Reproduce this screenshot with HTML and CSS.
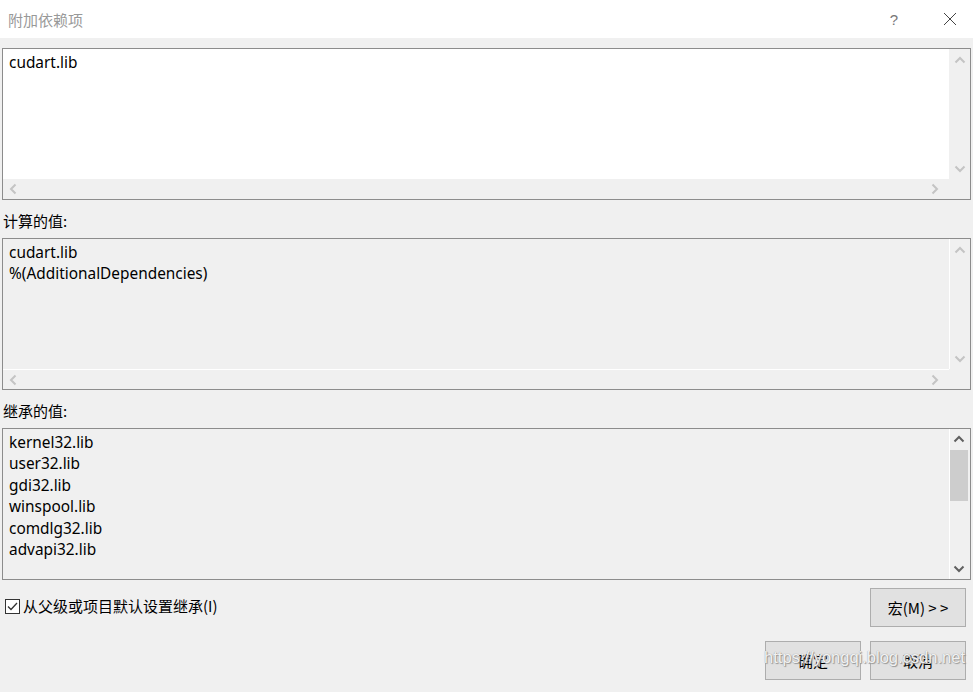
FILE: index.html
```html
<!DOCTYPE html>
<html lang="zh">
<head>
<meta charset="utf-8">
<link rel="stylesheet" href="styles.css">
</head>
<body>
<div class="dialog">
  <div class="titlebar">
    <span class="title">附加依赖项</span>
    <span class="help">?</span>
    <span class="close">
      <svg width="14" height="14" viewBox="0 0 14 14"><path d="M1 1L13 13M13 1L1 13" stroke="#444" stroke-width="1" fill="none"/></svg>
    </span>
  </div>
  <div class="content">
    <div class="box editable two">
      <div class="text">cudart.lib</div>
      <div class="vscroll">
        <svg class="arr" width="12" height="8" viewBox="0 0 12 8"><path d="M1.5 6.5L6 2L10.5 6.5" stroke="#c4c4c4" stroke-width="2" fill="none"/></svg>
        <svg class="arr" width="12" height="8" viewBox="0 0 12 8"><path d="M1.5 1.5L6 6L10.5 1.5" stroke="#c4c4c4" stroke-width="2" fill="none"/></svg>
      </div>
      <div class="hscroll">
        <svg class="arr" width="8" height="12" viewBox="0 0 8 12"><path d="M6.5 1.5L2 6L6.5 10.5" stroke="#c4c4c4" stroke-width="2" fill="none"/></svg>
        <svg class="arr" width="8" height="12" viewBox="0 0 8 12"><path d="M1.5 1.5L6 6L1.5 10.5" stroke="#c4c4c4" stroke-width="2" fill="none"/></svg>
      </div>
      <div class="corner"></div>
    </div>
    <div class="label">计算的值:</div>
    <div class="box readonly two">
      <div class="text">cudart.lib<br>%(AdditionalDependencies)</div>
      <div class="vscroll">
        <svg class="arr" width="12" height="8" viewBox="0 0 12 8"><path d="M1.5 6.5L6 2L10.5 6.5" stroke="#c4c4c4" stroke-width="2" fill="none"/></svg>
        <svg class="arr" width="12" height="8" viewBox="0 0 12 8"><path d="M1.5 1.5L6 6L10.5 1.5" stroke="#c4c4c4" stroke-width="2" fill="none"/></svg>
      </div>
      <div class="hscroll">
        <svg class="arr" width="8" height="12" viewBox="0 0 8 12"><path d="M6.5 1.5L2 6L6.5 10.5" stroke="#c4c4c4" stroke-width="2" fill="none"/></svg>
        <svg class="arr" width="8" height="12" viewBox="0 0 8 12"><path d="M1.5 1.5L6 6L1.5 10.5" stroke="#c4c4c4" stroke-width="2" fill="none"/></svg>
      </div>
      <div class="corner"></div>
    </div>
    <div class="label">继承的值:</div>
    <div class="box readonly one">
      <div class="text">kernel32.lib<br>user32.lib<br>gdi32.lib<br>winspool.lib<br>comdlg32.lib<br>advapi32.lib</div>
      <div class="vscroll active">
        <svg class="arr" width="12" height="8" viewBox="0 0 12 8"><path d="M1.5 6.5L6 2L10.5 6.5" stroke="#606060" stroke-width="2" fill="none"/></svg>
        <div class="thumb"></div>
        <div class="spacer"></div>
        <svg class="arr" width="12" height="8" viewBox="0 0 12 8"><path d="M1.5 1.5L6 6L10.5 1.5" stroke="#606060" stroke-width="2" fill="none"/></svg>
      </div>
    </div>
    <div class="bottom">
      <div class="left">
        <label class="check">
          <span class="cbox"><svg width="13" height="13" viewBox="0 0 13 13"><path d="M2 6.5L5 9.5L11 3" stroke="#333" stroke-width="1.3" fill="none"/></svg></span>
          <span class="ctext">从父级或项目默认设置继承(I)</span>
        </label>
      </div>
      <div class="right">
        <div class="btn">宏(M) &gt; &gt;</div>
        <div class="btnrow">
          <div class="btn">确定</div>
          <div class="btn">取消</div>
        </div>
      </div>
    </div>
  </div>
  <div class="watermark">https://yongqi.blog.csdn.net</div>
</div>
</body>
</html>
```
FILE: styles.css
```css
* { box-sizing: border-box; }
html, body { margin: 0; padding: 0; }
body {
  width: 973px;
  height: 692px;
  overflow: hidden;
  background: #f0f0f0;
  font-family: "Noto Sans", "Noto Sans CJK SC", sans-serif;
  font-size: 15px;
  color: #000;
}
.dialog { position: relative; width: 973px; height: 692px; }
.titlebar {
  height: 38px;
  background: #fff;
  display: flex;
  align-items: center;
  padding-left: 8px;
}
.title { color: #999; font-family: "Noto Sans CJK SC", sans-serif; font-size: 15px; flex: 1; }
.help { color: #777; font-size: 15px; width: 30px; margin-right: 34px; text-align: center; font-family: "Liberation Sans", sans-serif; }
.close { width: 14px; height: 14px; margin-right: 16px; display: flex; }
.content { padding: 10px 2px 0 2px; }
.box {
  height: 152px;
  border: 1px solid #8c8c8c;
  display: grid;
  grid-template-columns: 1fr 21px;
}
.box.two { grid-template-rows: 1fr 20px; }
.box.one { grid-template-rows: 1fr; }
.editable .text { background: #fff; }
.readonly .text { background: #f0f0f0; }
.text {
  padding: 3px 6px 2px;
  line-height: 21.4px;
  font-family: "Noto Sans", "Noto Sans CJK SC", sans-serif;
  font-size: 15.4px;
  overflow: hidden;
}
.vscroll {
  background: #f0f0f0;
  display: flex;
  flex-direction: column;
  align-items: center;
  justify-content: space-between;
  padding: 7px 0 6px;
}
.readonly .vscroll { border-left: 1px solid #fff; }
.vscroll.active { padding: 6px 2px 6px 0; }
.vscroll .thumb {
  width: 18px;
  height: 51px;
  background: #cdcdcd;
  margin-top: 7px;
}
.vscroll .spacer { flex: 1; }
.hscroll {
  background: #f0f0f0;
  display: flex;
  align-items: center;
  justify-content: space-between;
  padding: 0 28px 0 6px;
}
.readonly .hscroll { border-top: 1px solid #fff; }
.hscroll .arr:last-child { margin-right: -18px; }
.corner { background: #f0f0f0; }
.label {
  height: 38px;
  padding-top: 11px;
  padding-left: 1px;
  line-height: 20px;
  font-family: "Noto Sans CJK SC", sans-serif;
  font-size: 15px;
}
.bottom {
  display: flex;
  justify-content: space-between;
  padding-top: 8px;
}
.left { padding-top: 8px; padding-left: 3px; }
.check { display: flex; align-items: center; gap: 3px; }
.cbox {
  width: 15px; height: 15px;
  border: 1px solid #333;
  background: #fff;
  display: flex; align-items: center; justify-content: center;
}
.ctext { font-family: "Noto Sans CJK SC", sans-serif; font-size: 15px; line-height: 20px; }
.right {
  display: flex;
  flex-direction: column;
  align-items: flex-end;
  gap: 14px;
  padding-right: 5px;
}
.btnrow { display: flex; gap: 9px; }
.btn {
  width: 96px;
  height: 39px;
  background: #e1e1e1;
  border: 1px solid #adadad;
  display: flex;
  align-items: center;
  justify-content: center;
  font-family: "Noto Sans CJK SC", sans-serif;
  font-size: 15px;
}
.watermark {
  position: absolute;
  right: 8px;
  top: 648px;
  font-family: "Liberation Sans", sans-serif;
  font-size: 16.5px;
  color: rgba(255,255,255,0.9);
  text-shadow: 0 0 1px #888, 1px 1px 1px #999;
}
```
